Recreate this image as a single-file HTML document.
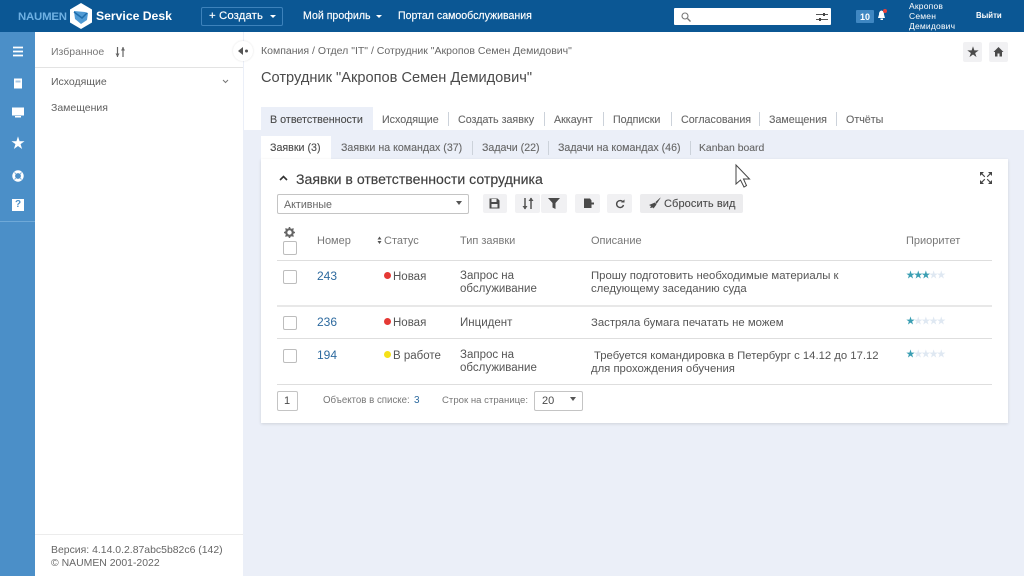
<!DOCTYPE html>
<html><head><meta charset="utf-8"><style>
html,body{margin:0;padding:0;width:1024px;height:576px;overflow:hidden;background:#ebeff8;font-family:"Liberation Sans","Noto Sans CJK JP",sans-serif;color:#444}
.a,.t{position:absolute}
.t{white-space:nowrap;font-size:11px;line-height:14px}
.w{color:#fff}.g{color:#777}.d{color:#4a4a4a}.l{color:#2d6a9f}
.nav{font-size:10.600px;-webkit-text-stroke:.15px #fff}
.tab{font-size:10.700px;color:#666;-webkit-text-stroke:.1px #666}
.sub{font-size:10.650px;color:#666;-webkit-text-stroke:.1px #666}
.b{position:absolute;background:#f1f1f3;border-radius:2px}
.line{position:absolute;height:1px;background:#dedede}
.sep{position:absolute;width:1px;height:14px;background:#ccd2da}
.cb{position:absolute;width:12px;height:12px;border:1px solid #bdbdbd;border-radius:2px;background:#fff}
.dot{position:absolute;width:7px;height:7px;border-radius:50%}
.st{font-size:9px;line-height:12px;letter-spacing:-1.300px}
.on{color:#3b9fb3}.off{color:#dfe8f2}
svg{position:absolute;overflow:visible}
</style></head><body>
<div class="a" style="left:0;top:0;width:1024px;height:32px;background:#0b5794"></div>
<div class="t" style="left:18px;top:10px;font-size:11.400px;color:#6fb1e3;font-weight:bold;letter-spacing:-.2px">NAUMEN</div>
<svg style="left:69px;top:2px" width="24" height="28" viewBox="0 0 24 28"><path d="M12 1 23 7.500v13L12 27 1 20.500v-13z" fill="#fff"/><path d="M5 9l11 1 3 1-1 7-6 4-6-5z" fill="#4f9ad4"/><path d="M5 10l8 6 5-5" fill="none" stroke="#1d6cab" stroke-width="1.500"/></svg>
<div class="t w" style="left:96px;top:9px;font-size:12.200px;font-weight:bold">Service Desk</div>
<div class="a" style="left:201px;top:7px;width:80px;height:17px;border:1px solid #3d82bb;border-radius:2px"></div>
<div class="t w nav" style="left:209px;top:9px;font-size:11.400px;letter-spacing:.1px">+ Создать</div>
<div class="a" style="left:270px;top:15px;border:3px solid transparent;border-top:3px solid #fff"></div>
<div class="t w nav" style="left:303px;top:9px">Мой профиль</div>
<div class="a" style="left:376px;top:15px;border:3px solid transparent;border-top:3px solid #fff"></div>
<div class="t w nav" style="left:398px;top:9px">Портал самообслуживания</div>
<div class="a" style="left:674px;top:8px;width:157px;height:17px;background:#fff;border-radius:1px"></div>
<svg style="left:681px;top:12px" width="10" height="10"><circle cx="4" cy="4" r="3" fill="none" stroke="#777" stroke-width="1.100"/><path d="M6.500 6.500 9.500 9.500" stroke="#777" stroke-width="1.300"/></svg>
<svg style="left:816px;top:12px" width="12" height="10"><path d="M0 2.500h12M0 7.500h12" stroke="#555" stroke-width="1"/><rect x="7" y="1" width="2" height="3" fill="#444"/><rect x="3" y="6" width="2" height="3" fill="#444"/></svg>
<div class="a" style="left:856px;top:10px;width:18px;height:13px;background:#3f87c2;border-radius:1px"></div>
<div class="t w" style="left:860px;top:10px;font-size:9px;font-weight:bold">10</div>
<svg style="left:877px;top:9px" width="11" height="13"><path d="M4.500 1.500c-2 .5-2.500 2-2.500 4L1 9h7L7 5.500c0-2-.5-3.500-2.500-4z" fill="#fff"/><rect x="3.500" y="9.500" width="2.500" height="1.500" fill="#fff"/><circle cx="8" cy="2" r="2" fill="#e8413c"/></svg>
<div class="t w" style="left:909px;top:1px;font-size:8.500px;line-height:10px;letter-spacing:.2px">Акропов<br>Семен<br>Демидович</div>
<div class="t w" style="left:976px;top:9px;font-size:7.800px;font-weight:bold">Выйти</div>

<div class="a" style="left:0;top:32px;width:35px;height:544px;background:#4b8fc8"></div>
<div class="a" style="left:0;top:221px;width:35px;height:1px;background:#6fa9d8"></div>
<svg style="left:12px;top:46px" width="12" height="11"><path d="M1 1.500h10M1 5.500h10M1 9.500h10" stroke="#fff" stroke-width="1.800"/></svg>
<svg style="left:13px;top:78px" width="10" height="11"><rect x="1" y="0.500" width="8" height="10" fill="#fff"/><rect x="2.500" y="2.500" width="5" height="2" fill="#a9c8e4"/></svg>
<svg style="left:12px;top:107px" width="12" height="12"><rect x="0" y="0.500" width="12" height="8" fill="#fff"/><rect x="3" y="9" width="6" height="1.500" fill="#fff"/></svg>
<div class="t w" style="left:11px;top:136px;font-size:14px">★</div>
<svg style="left:12px;top:170px" width="12" height="12"><circle cx="6" cy="6" r="4.300" fill="none" stroke="#fff" stroke-width="2.800"/><path d="M2.500 2.500 4 4M9.500 2.500 8 4M2.500 9.500 4 8M9.500 9.500 8 8" stroke="#7fb0da" stroke-width=".9"/></svg>
<div class="a" style="left:12px;top:199px;width:12px;height:12px;background:#fff"></div>
<div class="t" style="left:15px;top:199px;font-size:10px;line-height:12px;font-weight:bold;color:#4b8fc8">?</div>

<div class="a" style="left:35px;top:32px;width:208px;height:544px;background:#fff"></div>
<div class="t g" style="left:51px;top:45px;font-size:10.500px">Избранное</div>
<svg style="left:115px;top:46px" width="11" height="12"><path d="M2.500 1v10M8 1v10" stroke="#666" stroke-width="1.200"/><path d="M.5 7.500h4L2.500 11zM6 4.500h4L8 1z" fill="#666"/></svg>
<div class="line" style="left:35px;top:67px;width:208px;background:#e3e3e3"></div>
<div class="t d" style="left:51px;top:75px;color:#5f5f5f;font-size:10.500px">Исходящие</div>
<svg style="left:222px;top:79px" width="7" height="5"><path d="M1 1l2.500 2.500L6 1" fill="none" stroke="#777" stroke-width="1"/></svg>
<div class="t d" style="left:51px;top:101px;color:#5f5f5f;font-size:10.500px">Замещения</div>
<div class="line" style="left:35px;top:534px;width:208px;background:#ececec"></div>
<div class="t" style="left:51px;top:544px;font-size:10.450px;color:#666">Версия: 4.14.0.2.87abc5b82c6 (142)</div>
<div class="t" style="left:51px;top:557px;font-size:10.450px;color:#666">© NAUMEN 2001-2022</div>

<div class="a" style="left:244px;top:32px;width:780px;height:98px;background:#fff"></div>
<div class="a" style="left:233px;top:41px;width:20px;height:20px;border-radius:50%;background:#fff;box-shadow:0 0 2px rgba(0,0,0,.12)"></div>
<svg style="left:238px;top:47px" width="11" height="8"><path d="M5 0v8L0 4z" fill="#555"/><circle cx="8.500" cy="4" r="1.500" fill="#555"/></svg>
<div class="t g" style="left:261px;top:44px;font-size:10.530px;color:#666">Компания / Отдел "IT" / Сотрудник "Акропов Семен Демидович"</div>
<div class="t" style="left:261px;top:69px;font-size:14.620px;line-height:18px;color:#4a4a4a">Сотрудник "Акропов Семен Демидович"</div>
<div class="b" style="left:963px;top:42px;width:19px;height:20px"></div>
<div class="t d" style="left:967px;top:45px;font-size:12px">★</div>
<div class="b" style="left:989px;top:42px;width:19px;height:20px"></div>
<svg style="left:993px;top:46px" width="11" height="11"><path d="M5.500 1 0.500 6H2v4.500h2.500V7.500h2v3H9V6h1.500z" fill="#4a4a4a"/></svg>

<div class="a" style="left:261px;top:107px;width:112px;height:23px;background:#ebeff8"></div>
<div class="t d" style="left:270px;top:113px;font-size:10.750px;-webkit-text-stroke:.1px #4a4a4a">В ответственности</div>
<div class="t tab" style="left:382px;top:113px">Исходящие</div><div class="sep" style="left:448px;top:112px"></div>
<div class="t tab" style="left:458px;top:113px">Создать заявку</div><div class="sep" style="left:544px;top:112px"></div>
<div class="t tab" style="left:554px;top:113px">Аккаунт</div><div class="sep" style="left:603px;top:112px"></div>
<div class="t tab" style="left:613px;top:113px">Подписки</div><div class="sep" style="left:671px;top:112px"></div>
<div class="t tab" style="left:681px;top:113px">Согласования</div><div class="sep" style="left:759px;top:112px"></div>
<div class="t tab" style="left:769px;top:113px">Замещения</div><div class="sep" style="left:836px;top:112px"></div>
<div class="t tab" style="left:846px;top:113px">Отчёты</div>

<div class="a" style="left:261px;top:136px;width:70px;height:24px;background:#fff"></div>
<div class="t d" style="left:270px;top:141px;font-size:10.700px;-webkit-text-stroke:.1px #4a4a4a">Заявки (3)</div>
<div class="t sub" style="left:341px;top:141px">Заявки на командах (37)</div><div class="sep" style="left:472px;top:141px"></div>
<div class="t sub" style="left:482px;top:141px">Задачи (22)</div><div class="sep" style="left:548px;top:141px"></div>
<div class="t sub" style="left:558px;top:141px">Задачи на командах (46)</div><div class="sep" style="left:690px;top:141px"></div>
<div class="t sub" style="left:699px;top:142px;font-size:10.400px">Kanban board</div>

<div class="a" style="left:261px;top:159px;width:747px;height:264px;background:#fff;box-shadow:0 1px 3px rgba(0,0,0,.12)"></div>
<svg style="left:279px;top:175px" width="9" height="6"><path d="M1 5l3.500-3.500L8 5" fill="none" stroke="#333" stroke-width="1.600"/></svg>
<div class="t" style="left:296px;top:171px;font-size:14.100px;line-height:17px;color:#3f3f3f;-webkit-text-stroke:.15px #3f3f3f">Заявки в ответственности сотрудника</div>
<svg style="left:980px;top:172px" width="12" height="12"><path d="M0 0h4L0 4zM12 0v4L8 0zM12 12H8l4-4zM0 12V8l4 4z" fill="#444"/><path d="M1.500 1.500 4.800 4.800M10.500 1.500 7.200 4.800M10.500 10.500 7.200 7.200M1.500 10.500 4.800 7.200" stroke="#444" stroke-width="1.100"/></svg>
<svg style="left:735px;top:164px" width="16" height="24"><path d="M1 1v19l4.500-4 3.500 7 2.500-1.500-3-6.500h6z" fill="#fff" stroke="#444" stroke-width="1"/></svg>

<div class="a" style="left:277px;top:194px;width:190px;height:18px;border:1px solid #c4c4c4;border-radius:2px;background:#fff"></div>
<div class="t g" style="left:284px;top:198px;color:#666;font-size:10.700px">Активные</div>
<div class="a" style="left:456px;top:201px;border:3px solid transparent;border-top:4px solid #555"></div>
<div class="b" style="left:483px;top:194px;width:24px;height:19px"></div>
<svg style="left:489px;top:198px" width="11" height="11"><path d="M0.500 0.500h8l2 2v8h-10z" fill="#4a4a4a"/><rect x="2.500" y="1" width="5" height="3" fill="#eee"/><rect x="2.500" y="6" width="6" height="3.500" fill="#eee"/></svg>
<div class="b" style="left:515px;top:194px;width:25px;height:19px"></div>
<div class="b" style="left:541px;top:194px;width:26px;height:19px"></div>
<svg style="left:522px;top:197px" width="12" height="13"><path d="M3 1v11M9 1v11" stroke="#555" stroke-width="1.500"/><path d="M.5 9h5L3 12.500zM6.500 4h5L9 .5z" fill="#555"/></svg>
<svg style="left:548px;top:198px" width="12" height="11"><path d="M0 0h12L7.500 5v6l-3-1.500V5z" fill="#4a4a4a"/></svg>
<div class="b" style="left:575px;top:194px;width:25px;height:19px"></div>
<svg style="left:584px;top:198px" width="11" height="11"><path d="M0 .5h6l1.500 2v2H10V6.500H7.500V10H0z" fill="#4a4a4a"/></svg>
<div class="b" style="left:607px;top:194px;width:25px;height:19px"></div>
<svg style="left:615px;top:199px" width="10" height="10"><path d="M8 3A3.500 3.500 0 1 0 8.500 6" fill="none" stroke="#4a4a4a" stroke-width="1.400"/><path d="M6 3.500h3.500V.5z" fill="#4a4a4a"/></svg>
<div class="a" style="left:640px;top:194px;width:103px;height:19px;background:#ececee;border-radius:2px"></div>
<svg style="left:648px;top:197px" width="13" height="13"><path d="M12.500.5 7.500 5l1 2 4-6zM7 5.500 1 8l2 1-1 2 3-.5.500 1L8.500 7.500z" fill="#4a4a4a"/></svg>
<div class="t d" style="left:664px;top:197px;letter-spacing:.1px;-webkit-text-stroke:.1px #4a4a4a">Сбросить вид</div>

<svg style="left:284px;top:227px" width="11" height="11"><circle cx="5.500" cy="5.500" r="3.300" fill="none" stroke="#666" stroke-width="2.200"/><path d="M5.500 0v2M5.500 9v2M0 5.500h2M9 5.500h2M1.500 1.500 3 3M8 8l1.500 1.500M9.500 1.500 8 3M3 8 1.500 9.500" stroke="#666" stroke-width="1.500"/></svg>
<div class="cb" style="left:283px;top:241px"></div>
<div class="t g" style="left:317px;top:234px;color:#777">Номер</div>
<svg style="left:377px;top:236px" width="5" height="9"><path d="M.5 3.500h4L2.500 .5zM.5 5h4L2.500 8z" fill="#555"/></svg>
<div class="t g" style="left:384px;top:234px;color:#777">Статус</div>
<div class="t g" style="left:460px;top:234px;color:#777">Тип заявки</div>
<div class="t g" style="left:591px;top:234px;color:#777">Описание</div>
<div class="t g" style="left:906px;top:234px;color:#777">Приоритет</div>
<div class="line" style="left:277px;top:260px;width:715px"></div>

<div class="cb" style="left:283px;top:270px"></div>
<div class="t l" style="left:317px;top:269px;font-size:12px">243</div>
<div class="dot" style="left:384px;top:272px;background:#e53935"></div>
<div class="t d" style="left:393px;top:270px;font-size:11.500px;color:#555">Новая</div>
<div class="t d" style="left:460px;top:270px;line-height:13px;font-size:11.500px;color:#555">Запрос на<br>обслуживание</div>
<div class="t d" style="left:591px;top:270px;line-height:13px;font-size:11.350px;color:#555">Прошу подготовить необходимые материалы к<br>следующему заседанию суда</div>
<div class="t st" style="left:906px;top:269px"><span class="on">★★★</span><span class="off">★★</span></div>
<div class="line" style="left:277px;top:305px;width:715px;background:#e8e8e8;height:2px"></div>

<div class="cb" style="left:283px;top:316px"></div>
<div class="t l" style="left:317px;top:315px;font-size:12px">236</div>
<div class="dot" style="left:384px;top:318px;background:#e53935"></div>
<div class="t d" style="left:393px;top:316px;font-size:11.500px;color:#555">Новая</div>
<div class="t d" style="left:460px;top:316px;font-size:11.500px;color:#555">Инцидент</div>
<div class="t d" style="left:591px;top:316px;font-size:11.350px;color:#555">Застряла бумага печатать не можем</div>
<div class="t st" style="left:906px;top:315px"><span class="on">★</span><span class="off">★★★★</span></div>
<div class="line" style="left:277px;top:338px;width:715px"></div>

<div class="cb" style="left:283px;top:349px"></div>
<div class="t l" style="left:317px;top:348px;font-size:12px">194</div>
<div class="dot" style="left:384px;top:351px;background:#f5e118"></div>
<div class="t d" style="left:393px;top:349px;font-size:11.500px;color:#555">В работе</div>
<div class="t d" style="left:460px;top:349px;line-height:13px;font-size:11.500px;color:#555">Запрос на<br>обслуживание</div>
<div class="t d" style="left:594px;top:349px;font-size:11.300px;color:#555">Требуется командировка в Петербург с 14.12 до 17.12</div>
<div class="t d" style="left:591px;top:362px;font-size:11.300px;color:#555">для прохождения обучения</div>
<div class="t st" style="left:906px;top:348px"><span class="on">★</span><span class="off">★★★★</span></div>
<div class="line" style="left:277px;top:384px;width:715px"></div>

<div class="a" style="left:277px;top:391px;width:19px;height:18px;border:1px solid #c4c4c4;border-radius:2px"></div>
<div class="t d" style="left:284px;top:394px">1</div>
<div class="t g" style="left:323px;top:394px;font-size:9.700px;color:#777">Объектов в списке:</div>
<div class="t l" style="left:414px;top:394px;font-size:10px">3</div>
<div class="t g" style="left:442px;top:394px;font-size:9.600px;color:#777">Строк на странице:</div>
<div class="a" style="left:534px;top:391px;width:47px;height:18px;border:1px solid #c4c4c4;border-radius:2px"></div>
<div class="t d" style="left:542px;top:394px;font-size:11px">20</div>
<div class="a" style="left:570px;top:397px;border:3px solid transparent;border-top:4px solid #555"></div>
</body></html>
